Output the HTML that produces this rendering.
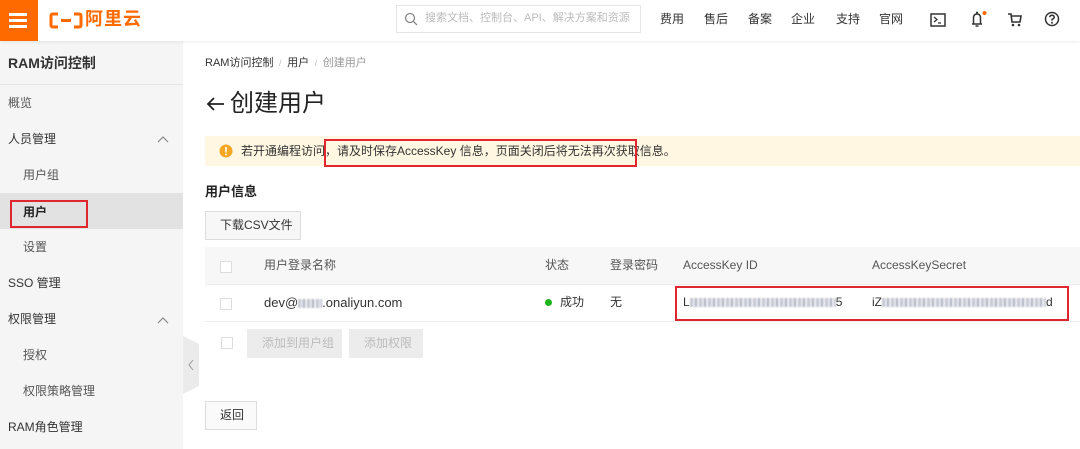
<!DOCTYPE html>
<html><head><meta charset="utf-8">
<style>
*{margin:0;padding:0;box-sizing:border-box}
body{width:1080px;height:449px;overflow:hidden;background:#fff;font-family:"Liberation Sans","Noto Sans CJK SC",sans-serif;color:#333;position:relative;font-size:12px;line-height:1.32}
.a{position:absolute;white-space:nowrap}
.top{position:absolute;left:0;top:0;width:1080px;height:41px;background:#fff;box-shadow:0 1px 3px rgba(0,0,0,.08);z-index:2}
.side{position:absolute;left:0;top:41px;width:183px;height:408px;background:#f5f5f5}
.nav{font-size:12px;color:#333;top:12px}
.si{font-size:12px;color:#333}
.chk{position:absolute;width:12px;height:12px;border:1px solid #ddd;background:#fff}
.red{position:absolute;border:2px solid #e0262f}
.blur{display:inline-block;height:9px;vertical-align:-1px;background:repeating-linear-gradient(90deg,#b8bcc8 0 3px,#e4e6ec 3px 5px,#9aa0b0 5px 7px,#f0f0f4 7px 9px);filter:blur(0.8px);opacity:.8}
</style></head><body>
<div class="top">
  <div class="a" style="left:0;top:0;width:38px;height:41px;background:#ff6a00"></div>
  <div class="a" style="left:9px;top:13px;width:18px;height:3px;background:#fff"></div>
  <div class="a" style="left:9px;top:19px;width:18px;height:3px;background:#fff"></div>
  <div class="a" style="left:9px;top:25px;width:18px;height:3px;background:#fff"></div>
  <svg class="a" style="left:49px;top:12px" width="34" height="17" viewBox="0 0 34 17"><path d="M9 2H4Q2 2 2 4V13Q2 15 4 15H9M25 2H30Q32 2 32 4V13Q32 15 30 15H25M12 8.5H22" stroke="#ff6a00" stroke-width="3" fill="none"/></svg>
  <div class="a" style="left:85px;top:8px;font-size:18px;font-weight:bold;color:#ff6a00;letter-spacing:1px">阿里云</div>
  <div class="a" style="left:396px;top:5px;width:245px;height:28px;border:1px solid #e5e5e5"></div>
  <svg class="a" style="left:404px;top:12px" width="14" height="14"><circle cx="6" cy="6" r="4.5" stroke="#888" stroke-width="1.3" fill="none"/><path d="M9.5 9.5L13 13" stroke="#888" stroke-width="1.3"/></svg>
  <div class="a" style="left:425px;top:11px;font-size:11px;color:#bbb">搜索文档、控制台、API、解决方案和资源</div>
  <div class="a nav" style="left:660px">费用</div>
  <div class="a nav" style="left:704px">售后</div>
  <div class="a nav" style="left:748px">备案</div>
  <div class="a nav" style="left:791px">企业</div>
  <div class="a nav" style="left:836px">支持</div>
  <div class="a nav" style="left:879px">官网</div>
  <svg class="a" style="left:930px;top:13px" width="16" height="14"><rect x="1" y="1" width="14" height="12" stroke="#333" stroke-width="1.5" fill="none"/><path d="M4 4L7 6.5L4 9M8 10H11" stroke="#333" stroke-width="1.3" fill="none"/></svg>
  <svg class="a" style="left:968px;top:10px" width="20" height="18"><path d="M4 14H14M5.5 14V8Q5.5 4 9 4Q12.5 4 12.5 8V14M8 2.5H10M7.5 16H10.5" stroke="#333" stroke-width="1.5" fill="none"/><circle cx="16.5" cy="3" r="2" fill="#ff6a00"/></svg>
  <svg class="a" style="left:1007px;top:12px" width="16" height="16"><path d="M1 2H4L5 10H13L14 4H4.5" stroke="#333" stroke-width="1.6" fill="none"/><circle cx="6" cy="13" r="1.3" fill="#333"/><circle cx="12" cy="13" r="1.3" fill="#333"/></svg>
  <svg class="a" style="left:1044px;top:11px" width="16" height="16"><circle cx="8" cy="8" r="6.5" stroke="#333" stroke-width="1.5" fill="none"/><path d="M5.8 6.3Q5.8 4.2 8 4.2Q10.2 4.2 10.2 6.2Q10.2 7.4 8 8.4V9.6" stroke="#333" stroke-width="1.5" fill="none"/><circle cx="8" cy="11.8" r="1" fill="#333"/></svg>
</div>
<div class="side"></div>
<div class="a" style="left:8px;top:54px;font-size:14px;font-weight:bold;color:#333">RAM访问控制</div>
<div class="a" style="left:0;top:84px;width:183px;height:1px;background:#e5e5e5"></div>
<div class="a si" style="left:8px;top:96px;color:#555">概览</div>
<div class="a si" style="left:8px;top:132px">人员管理</div>
<svg class="a" style="left:157px;top:135px" width="12" height="8"><path d="M1 7L6 2L11 7" stroke="#888" stroke-width="1.2" fill="none"/></svg>
<div class="a si" style="left:23px;top:168px;color:#555">用户组</div>
<div class="a" style="left:0;top:193px;width:183px;height:36px;background:#e2e2e2"></div>
<div class="a si" style="left:23px;top:205px;font-weight:bold;color:#222">用户</div>
<div class="red" style="left:10px;top:200px;width:78px;height:28px"></div>
<div class="a si" style="left:23px;top:240px;color:#555">设置</div>
<div class="a si" style="left:8px;top:276px">SSO 管理</div>
<div class="a si" style="left:8px;top:312px">权限管理</div>
<svg class="a" style="left:157px;top:316px" width="12" height="8"><path d="M1 7L6 2L11 7" stroke="#888" stroke-width="1.2" fill="none"/></svg>
<div class="a si" style="left:23px;top:348px;color:#555">授权</div>
<div class="a si" style="left:23px;top:384px;color:#555">权限策略管理</div>
<div class="a si" style="left:8px;top:420px">RAM角色管理</div>
<svg class="a" style="left:183px;top:336px" width="17" height="58"><path d="M0 0L16 8V50L0 58Z" fill="#ebebeb"/><path d="M10 24L6 29L10 34" stroke="#999" stroke-width="1" fill="none"/></svg>

<div class="a" style="left:205px;top:56px;font-size:11px;color:#333">RAM访问控制 <span style="color:#bbb;font-size:9px">&nbsp;/&nbsp;</span> 用户 <span style="color:#bbb;font-size:9px">&nbsp;/&nbsp;</span> <span style="color:#999">创建用户</span></div>
<svg class="a" style="left:205px;top:96px" width="20" height="16"><path d="M19 8H3M9 2L3 8L9 14" stroke="#222" stroke-width="1.8" fill="none"/></svg>
<div class="a" style="left:230px;top:88px;font-size:24px;color:#222">创建用户</div>
<div class="a" style="left:205px;top:136px;width:875px;height:30px;background:#fff7e2"></div>
<svg class="a" style="left:219px;top:144px" width="14" height="14"><circle cx="7" cy="7" r="6.5" fill="#f5a623"/><rect x="6.2" y="3" width="1.6" height="5.5" fill="#fff"/><circle cx="7" cy="10.5" r="0.9" fill="#fff"/></svg>
<div class="a" style="left:241px;top:144px;font-size:12px;color:#333">若开通编程访问，请及时保存AccessKey 信息，页面关闭后将无法再次获取信息。</div>
<div class="red" style="left:324px;top:139px;width:313px;height:28px"></div>
<div class="a" style="left:205px;top:183px;font-size:13px;font-weight:bold;color:#222">用户信息</div>
<div class="a" style="left:205px;top:211px;width:96px;height:29px;border:1px solid #ddd;background:#f7f7f7"></div>
<div class="a" style="left:220px;top:218px;font-size:12px">下载CSV文件</div>
<div class="a" style="left:205px;top:247px;width:875px;height:38px;background:#f7f7f7;border-bottom:1px solid #eee"></div>
<div class="chk" style="left:220px;top:261px"></div>
<div class="a" style="left:264px;top:258px;color:#555">用户登录名称</div>
<div class="a" style="left:545px;top:258px;color:#555">状态</div>
<div class="a" style="left:610px;top:258px;color:#555">登录密码</div>
<div class="a" style="left:683px;top:258px;color:#555">AccessKey ID</div>
<div class="a" style="left:872px;top:258px;color:#555">AccessKeySecret</div>
<div class="a" style="left:205px;top:321px;width:875px;height:1px;background:#eee"></div>
<div class="chk" style="left:220px;top:298px"></div>
<div class="a" style="left:264px;top:294px;font-size:13px">dev@<span class="blur" style="width:24px"></span>.onaliyun.com</div>
<div class="a" style="left:545px;top:299px;width:7px;height:7px;border-radius:50%;background:#1fb41f"></div>
<div class="a" style="left:560px;top:295px;font-size:12px">成功</div>
<div class="a" style="left:610px;top:295px;font-size:12px">无</div>
<div class="a" style="left:683px;top:295px;font-size:12px">L<span class="blur" style="width:146px"></span>5</div>
<div class="a" style="left:872px;top:295px;font-size:12px">iZ<span class="blur" style="width:164px"></span>d</div>
<div class="red" style="left:675px;top:286px;width:394px;height:35px"></div>
<div class="chk" style="left:221px;top:337px"></div>
<div class="a" style="left:247px;top:329px;width:95px;height:29px;background:#ececec"></div>
<div class="a" style="left:262px;top:336px;color:#bbb">添加到用户组</div>
<div class="a" style="left:349px;top:329px;width:74px;height:29px;background:#ececec"></div>
<div class="a" style="left:364px;top:336px;color:#bbb">添加权限</div>
<div class="a" style="left:205px;top:401px;width:52px;height:29px;border:1px solid #ddd;background:#fafafa"></div>
<div class="a" style="left:220px;top:408px">返回</div>
</body></html>
